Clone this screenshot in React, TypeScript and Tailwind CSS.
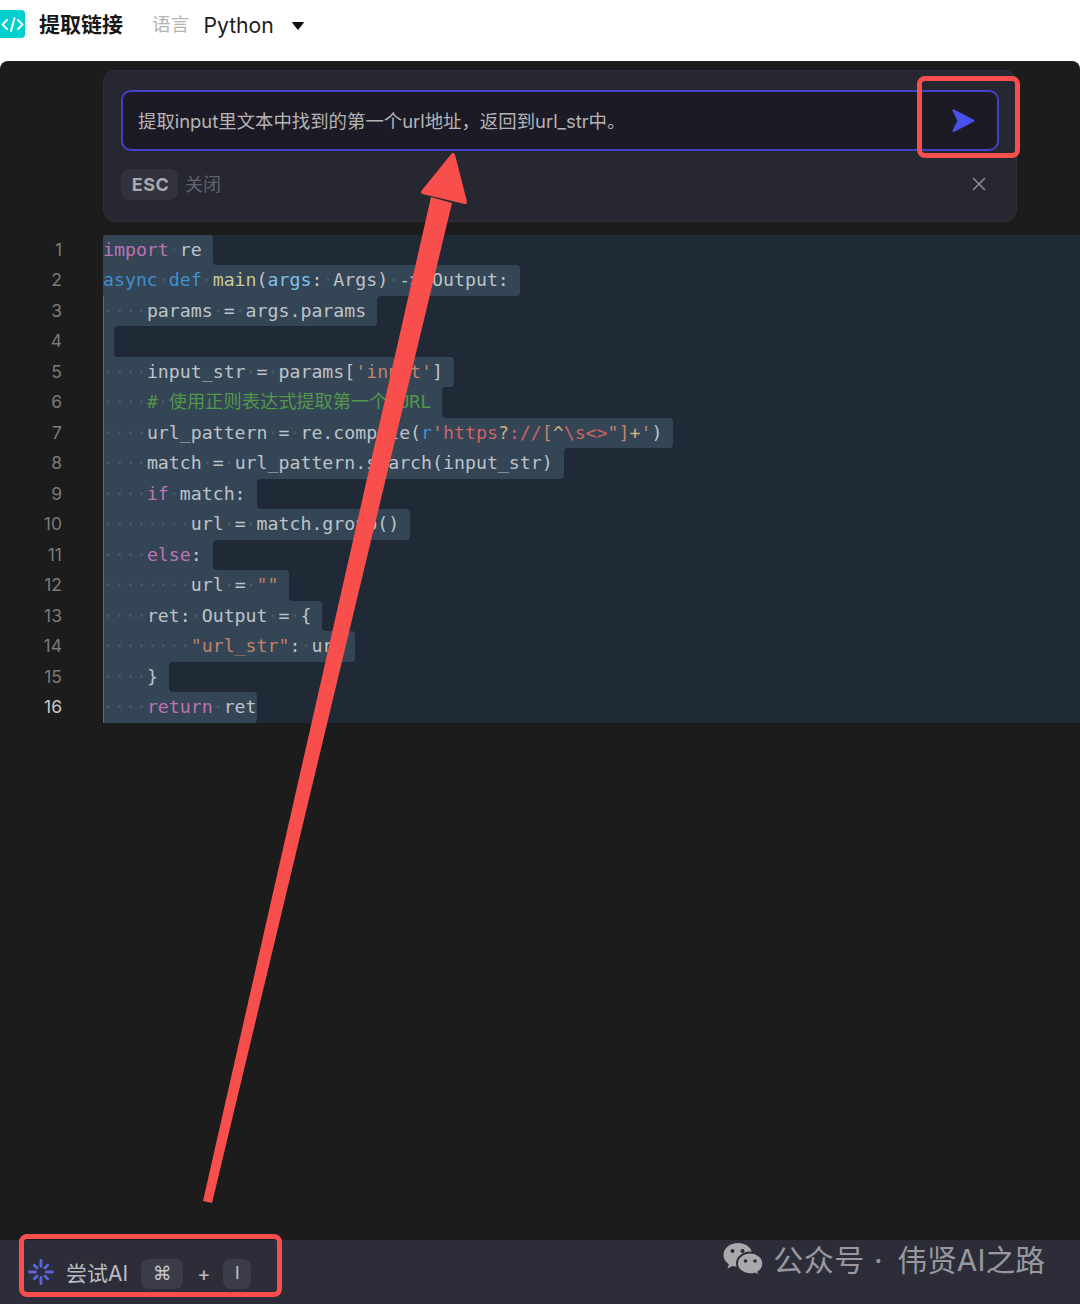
const pink = "text-[#bd74b4]";
const blue = "text-[#3f90cf]";
const yellow = "text-[#c9c993]";
const sky = "text-[#7cc3ea]";
const green = "text-[#52974a]";
const orange = "text-[#c18369]";
const red = "text-[#cf6363]";
const gold = "text-[#cfb077]";
const base = "text-[#bec3c8]";

type Token = [string, string];

const lines: Token[][] = [
  [["import", pink], [" re", base]],
  [["async def", blue], [" ", base], ["main", yellow], ["(", base], ["args", sky], [": Args) -> Output:", base]],
  [["    params = args.params", base]],
  [],
  [["    input_str = params[", base], ["'input'", orange], ["]", base]],
  [["    ", base], ["# 使用正则表达式提取第一个 URL", green]],
  [["    url_pattern = re.compile(", base], ["r", blue], ["'", orange], ["https", red], ["?", gold], ["://", red], ["[", orange], ["^", gold], ["\\s<>", red], ["\"]", orange], ["+", gold], ["'", orange], [")", base]],
  [["    match = url_pattern.search(input_str)", base]],
  [["    ", base], ["if", pink], [" match:", base]],
  [["        url = match.group()", base]],
  [["    ", base], ["else", pink], [":", base]],
  [["        url = ", base], ["\"\"", orange]],
  [["    ret: Output = {", base]],
  [["        ", base], ["\"url_str\"", orange], [": url", base]],
  [["    }", base]],
  [["    ", base], ["return", pink], [" ret", base]],
];

const units = (line: Token[]) =>
  line.reduce((sum, [t]) => sum + [...t].reduce((s, c) => s + (c.charCodeAt(0) > 255 ? 1.66 : 1), 0), 0);

const lengths = lines.map((l, i) => units(l) + (i === lines.length - 1 ? 0 : 1));

function clsx4(...c: string[]) {
  return c.filter(Boolean).join(" ");
}

function Text({ text, color }: { text: string; color: string }) {
  return (
    <span className={color}>
      {text.split(/( )/).map((part, i) =>
        part === " " ? (
          <span key={i} className="text-[#4b5a69]">·</span>
        ) : (
          <span key={i}>{part}</span>
        )
      )}
    </span>
  );
}

function CodeRow({ index }: { index: number }) {
  const len = lengths[index];
  const prev = index > 0 ? lengths[index - 1] : 0;
  const next = index < lines.length - 1 ? lengths[index + 1] : 0;
  return (
    <div className="flex h-[30.47px] leading-[30.47px] whitespace-pre">
      <div
        className={clsx4(
          "h-full bg-[#344556]",
          index === lines.length - 1 ? "" : "pr-[10.97px]",
          prev < len ? "rounded-tr-[4px]" : "",
          next < len ? "rounded-br-[4px]" : "",
          index === 0 ? "rounded-tl-[4px]" : "",
          index >= 2 ? "shadow-[inset_1px_0_0_#5d6c7b]" : ""
        )}
      >
        {lines[index].map(([t, c], i) => (
          <Text key={i} text={t} color={c} />
        ))}
      </div>
      <div className="h-full flex-1 bg-[linear-gradient(to_right,#344556_4px,transparent_4px)]">
        <div
          className={clsx4(
            "h-full bg-[#1f2a36]",
            prev > len ? "rounded-tl-[4px]" : "",
            next > len ? "rounded-bl-[4px]" : ""
          )}
        />
      </div>
    </div>
  );
}

function Spinner() {
  const spokes = [0, 45, 90, 135, 180, 225, 270, 315];
  return (
    <svg width="26" height="26" viewBox="0 0 26 26" className="shrink-0">
      {spokes.map((a) => (
        <line
          key={a}
          x1="13"
          y1={a % 90 === 0 ? 1.5 : 3.5}
          x2="13"
          y2="7.5"
          stroke="#5a66dc"
          strokeWidth="2.8"
          strokeLinecap="round"
          transform={`rotate(${a} 13 13)`}
        />
      ))}
    </svg>
  );
}

function WeChat() {
  return (
    <svg width="42" height="34" viewBox="0 0 42 34" className="shrink-0">
      <path d="M15 0C6.9 0 .5 5.4.5 12c0 3.8 2.1 7 5.3 9.2L4.5 25.5l5.2-2.6c1.7.5 3.4.8 5.3.8 8.1 0 14.5-5.2 14.5-11.7S23.1 0 15 0z" fill="#a8a8ad" />
      <path d="M27.5 9.5C19.9 9.5 14 14.4 14 20.4s5.900 10.900 13.500 10.900c1.500 0 3-.2 4.300-.6l4.700 2.700-1.200-4.200c3-2 4.900-5.200 4.900-8.800 0-6-5.900-10.900-12.700-10.900z" fill="#a8a8ad" stroke="#2c2d38" strokeWidth="2" />
      <circle cx="9.500" cy="8" r="2" fill="#2c2d38" />
      <circle cx="19.500" cy="8" r="2" fill="#2c2d38" />
      <circle cx="22.500" cy="18" r="1.800" fill="#2c2d38" />
      <circle cx="32" cy="18" r="1.800" fill="#2c2d38" />
    </svg>
  );
}

export default function App() {
  const sans = "font-['Inter','Noto_Sans_CJK_SC',sans-serif]";
  return (
    <div className={`relative h-[1304px] w-[1080px] overflow-hidden bg-white ${sans}`}>
      <header className="flex h-[61px] items-start pt-[10px]">
        <div className="flex h-[28px] w-[25px] items-center justify-center rounded-r-[4px] bg-[#00cfd0]">
          <svg width="25" height="28" viewBox="0 0 25 28" fill="none" stroke="white" strokeWidth="2" strokeLinecap="round" strokeLinejoin="round">
            <path d="M7 10 2.500 14.500 7 19" />
            <path d="M18 10 22.500 14.500 18 19" />
            <path d="M14.500 8 11 21" />
          </svg>
        </div>
        <div className="ml-[14px] text-[21px] font-semibold leading-[30px] text-[#171717]">提取链接</div>
        <div className="ml-[29px] text-[18.700px] leading-[30px] text-[#b4b4b4]">语言</div>
        <div className="ml-[14px] text-[21.200px] leading-[30px] text-[#1c1c1c]">Python</div>
        <svg width="12" height="8" viewBox="0 0 12 8" className="ml-[18px] mt-[12px]">
          <path d="M.5.500h11L6 7.500z" fill="#111" stroke="#111" strokeLinejoin="round" />
        </svg>
      </header>

      <main className="flex h-[1243px] flex-col rounded-t-[8px] bg-[#1c1c1c]">
        <section className="ml-[103px] mt-[9px] h-[152px] w-[914px] rounded-[12px] border border-[#2f3039] bg-[#262730] pl-[17px] pr-[17px] pt-[19px]">
          <div className="flex h-[61px] w-[878px] items-center justify-between rounded-[10px] border-2 border-[#4242c8] bg-[#1c1b25] pl-[15px] pr-[22px]">
            <span className="mt-[2px] whitespace-pre text-[18.400px] text-[#b4b4b4]">提取input里文本中找到的第一个url地址，返回到url_str中。</span>
            <svg width="23" height="24" viewBox="0 0 23 24" className="shrink-0">
              <path d="M1.500 1.500 21.500 11.700 1.500 22 6.500 11.700z" fill="#4a50ec" stroke="#4a50ec" strokeWidth="2" strokeLinejoin="round" />
            </svg>
          </div>
          <div className="mt-[18px] flex items-center pr-[13px]">
            <span className="flex h-[31px] w-[57px] items-center justify-center rounded-[8px] bg-[#31323b] pl-[2px] text-[18px] font-bold tracking-[0.5px] text-[#a8a8b2]">ESC</span>
            <span className="ml-[7px] text-[18px] text-[#62626c]">关闭</span>
            <svg width="14" height="14" viewBox="0 0 14 14" className="mb-[1px] ml-auto" stroke="#8f8f95" strokeWidth="1.500" strokeLinecap="round">
              <path d="M1.500 1.500 12.500 12.500M12.500 1.500 1.500 12.500" />
            </svg>
          </div>
        </section>

        <section className="mt-[13px] flex">
          <div className="w-[103px] shrink-0">
            {lines.map((_, i) => (
              <div
                key={i}
                className={clsx4(
                  "h-[30.47px] pr-[41px] text-right text-[17.500px] leading-[30.47px]",
                  i === lines.length - 1 ? "text-[#c8c8c8]" : "text-[#7a7a7a]"
                )}
              >
                {i + 1}
              </div>
            ))}
          </div>
          <div className="flex-1 bg-[#1f2a36] font-['DejaVu_Sans_Mono','Noto_Sans_CJK_SC',monospace] text-[18.230px]">
            {lines.map((_, i) => (
              <CodeRow key={i} index={i} />
            ))}
          </div>
        </section>

        <footer className="mt-auto flex h-[64px] items-center bg-[#2c2d38] pl-[28px] pr-[35px]">
          <Spinner />
          <div className="mt-[3px] ml-[12px] flex items-center">
            <span className="text-[21px] text-[#bcbcc4]">尝试AI</span>
            <span className="ml-[13px] flex h-[30px] w-[42px] items-center justify-center rounded-[8px] bg-[#3b3c47] font-['DejaVu_Sans',sans-serif] text-[19px] text-[#c4c4cc]">⌘</span>
            <span className="ml-[14px] text-[20px] text-[#bcbcc4]">+</span>
            <span className="ml-[13px] flex h-[30px] w-[28px] items-center justify-center rounded-[8px] bg-[#3b3c47] text-[17px] text-[#c4c4cc]">I</span>
          </div>
          <div className="ml-auto mb-[24px] flex items-center">
            <WeChat />
            <span className="ml-[8px] whitespace-pre text-[30px] leading-[36px] tracking-[0.6px] text-[#98989e]">公众号 ·</span>
            <span className="ml-[14px] whitespace-pre text-[29.800px] leading-[36px] text-[#98989e]">伟贤AI之路</span>
          </div>
        </footer>
      </main>

      <div className="pointer-events-none absolute left-[917px] top-[76px] h-[82px] w-[103px] rounded-[8px] border-[5px] border-[#f84f4c]" />
      <div className="pointer-events-none absolute left-[19px] top-[1234px] h-[63px] w-[263px] rounded-[8px] border-[5px] border-[#f84f4c]" />

      <svg className="pointer-events-none absolute left-0 top-0" width="1080" height="1304" viewBox="0 0 1080 1304">
        <path d="M203 1201 212 1203 452 203 431 197z" fill="#f84f4c" />
        <path d="M453 155 423 192 465 202z" fill="#f84f4c" stroke="#f84f4c" strokeWidth="4" strokeLinejoin="round" />
      </svg>
    </div>
  );
}
